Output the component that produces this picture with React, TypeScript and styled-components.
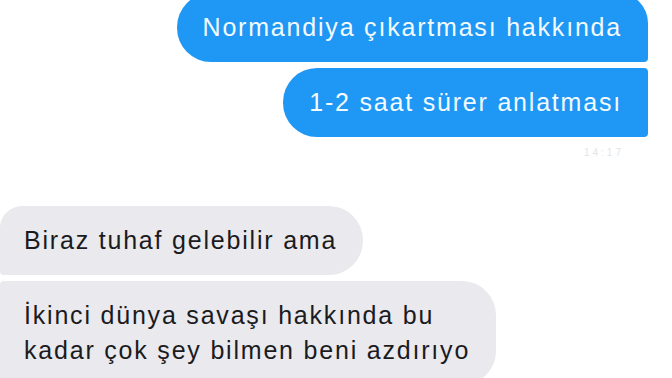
import React from 'react';
import styled, { createGlobalStyle } from 'styled-components';

type Side = 'out' | 'in';
type Corner = 'first' | 'middle' | 'last';

type Message = {
  side: Side;
  corner: Corner;
  text: string;
};

const outgoing: Message[] = [
  { side: 'out', corner: 'first', text: 'Normandiya çıkartması hakkında' },
  { side: 'out', corner: 'last', text: '1-2 saat sürer anlatması' },
];

const incoming: Message[] = [
  { side: 'in', corner: 'first', text: 'Biraz tuhaf gelebilir ama' },
  {
    side: 'in',
    corner: 'last',
    text: 'İkinci dünya savaşı hakkında bu\nkadar çok şey bilmen beni azdırıyo',
  },
];

const App = () => {
  return (
    <>
      <GlobalStyle />
      <Screen>
        <Group $side="out">
          {outgoing.map((m, i) => (
            <Bubble key={i} $side={m.side} $corner={m.corner}>
              {m.text}
            </Bubble>
          ))}
          <Stamp>14:17</Stamp>
        </Group>
        <Group $side="in">
          {incoming.map((m, i) => (
            <Bubble key={i} $side={m.side} $corner={m.corner}>
              {m.text}
            </Bubble>
          ))}
        </Group>
      </Screen>
    </>
  );
};

export default App;

const GlobalStyle = createGlobalStyle`
  html, body {
    margin: 0;
    padding: 0;
    background: #ffffff;
    overflow: hidden;
  }
  body {
    font-family: "Liberation Sans", Arial, sans-serif;
  }
`;

const Screen = styled.div`
  width: 672px;
  height: 378px;
  overflow: hidden;
  display: flex;
  flex-direction: column;
  gap: 48px;
  background: #ffffff;
`;

const Group = styled.div<{ $side: Side }>`
  display: flex;
  flex-direction: column;
  align-items: ${(p) => (p.$side === 'out' ? 'flex-end' : 'flex-start')};
  gap: 6px;
  margin-top: ${(p) => (p.$side === 'out' ? '-7px' : '0')};
  padding-right: ${(p) => (p.$side === 'out' ? '24px' : '0')};
`;

const radius = (side: Side, corner: Corner) => {
  const big = '34px';
  const round = '30px';
  const small = '4px';
  if (side === 'out') {
    const tr = corner === 'first' ? round : small;
    return `${big} ${tr} ${small} ${big}`;
  }
  const tl = corner === 'first' ? '22px' : small;
  return `${tl} ${big} ${big} ${small}`;
};

const Bubble = styled.div<{ $side: Side; $corner: Corner }>`
  box-sizing: border-box;
  padding: 17px 26px 17px 24px;
  padding-left: ${(p) => (p.$side === 'out' ? '26px' : '24px')};
  border-radius: ${(p) => radius(p.$side, p.$corner)};
  background: ${(p) => (p.$side === 'out' ? '#1f97f4' : '#e9e9ee')};
  color: ${(p) => (p.$side === 'out' ? '#f4fbff' : '#1b1b1d')};
  font-size: 25px;
  line-height: 35px;
  letter-spacing: 1.8px;
  white-space: pre-line;
`;

const Stamp = styled.div`
  margin-top: 4px;
  margin-right: 24px;
  font-size: 10px;
  letter-spacing: 3px;
  color: #e4e4e6;
`;
